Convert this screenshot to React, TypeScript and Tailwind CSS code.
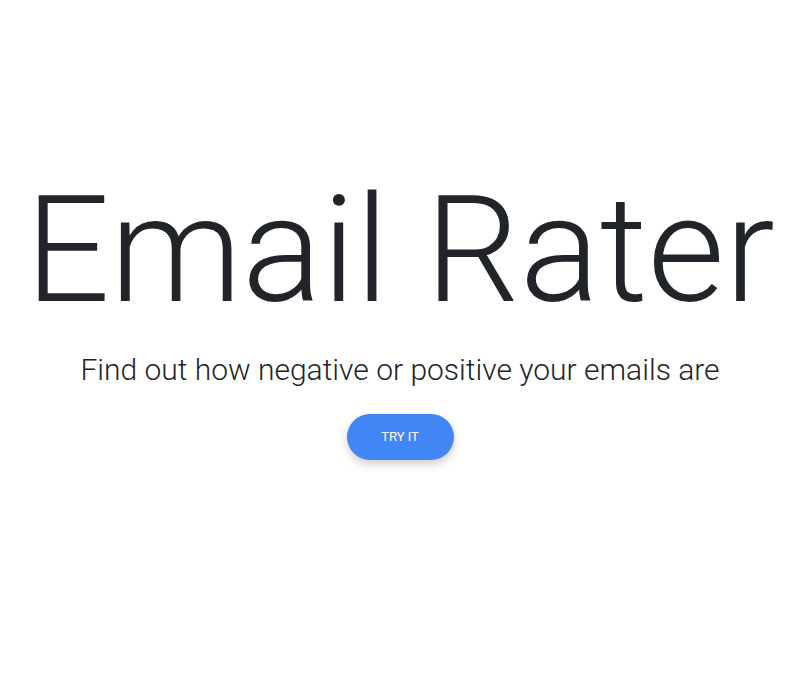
import React from "react";

export default function App() {
  return (
    <div
      className="min-h-[681px] w-full bg-white flex flex-col items-center pt-[160px] pr-[11px] text-[#212529]"
      style={{ fontFamily: "Roboto, 'Liberation Sans', sans-serif" }}
    >
      <h1 className="text-[149px] leading-[180px] font-light tracking-normal whitespace-nowrap">
        Email Rater
      </h1>
      <p className="mt-[7px] text-[30px] leading-[45px] font-light whitespace-nowrap">
        Find out how negative or positive your emails are
      </p>
      <button className="mt-[22px] w-[107px] h-[46px] rounded-full bg-[#4285f4] text-white text-[13px] uppercase shadow-[0_4px_10px_rgba(0,0,0,0.2)]">
        Try it
      </button>
    </div>
  );
}
